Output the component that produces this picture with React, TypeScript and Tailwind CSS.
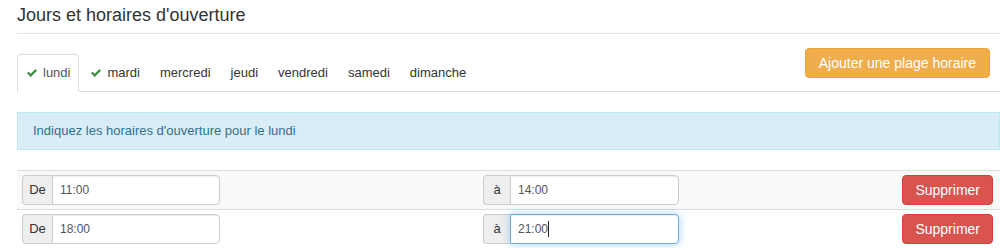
import React from "react";

const days = [
  { name: "lundi", done: true, active: true },
  { name: "mardi", done: true },
  { name: "mercredi" },
  { name: "jeudi" },
  { name: "vendredi" },
  { name: "samedi" },
  { name: "dimanche" },
];

const slots = [
  { from: "11:00", to: "14:00" },
  { from: "18:00", to: "21:00", focused: true },
];

function Check() {
  return (
    <svg width="10" height="8" viewBox="0 0 10 8" className="shrink-0 ml-[1px]">
      <polygon points="0,4.3 1.6,2.7 3.7,4.8 8.4,0.1 10,1.7 3.7,8" fill="#3f8f3f" />
    </svg>
  );
}

function TimeField({
  label,
  value,
  labelWidth,
  width,
  focused,
}: {
  label: string;
  value: string;
  labelWidth: string;
  width: string;
  focused?: boolean;
}) {
  return (
    <div className={`flex h-[30px] ${width}`}>
      <span
        className={`flex items-center justify-center ${labelWidth} shrink-0 bg-[#eee] border border-r-0 border-[#ccc] rounded-l-[4px] text-[13px] text-[#333]`}
      >
        {label}
      </span>
      <div className="relative flex-1">
        <input
          readOnly
          value={value}
          className={
            focused
              ? "w-full h-full pl-[7px] text-[12px] text-[#555] bg-white border border-[#66afe9] rounded-r-[4px] outline-none shadow-[inset_0_1px_1px_rgba(0,0,0,0.075),0_0_8px_rgba(102,175,233,0.6)]"
              : "w-full h-full pl-[7px] text-[12px] text-[#555] bg-white border border-[#ccc] rounded-r-[4px] outline-none shadow-[inset_0_1px_1px_rgba(0,0,0,0.075)]"
          }
        />
        {focused && (
          <span className="absolute left-[38px] top-[7px] h-[16px] w-px bg-[#222]" />
        )}
      </div>
    </div>
  );
}

export default function App() {
  return (
    <div className="pl-[17px] bg-white font-['Liberation_Sans',Arial,sans-serif] text-[13px] text-[#333]">
      <h4 className="pt-[5px] pb-[8px] text-[18px] leading-[20px] font-normal border-b border-[#e5e5e5]">
        Jours et horaires d'ouverture
      </h4>

      <div className="flex items-start justify-between mt-[14px] border-b border-[#ddd]">
        <ul className="flex mt-[6px]">
          {days.map((d) => (
            <li
              key={d.name}
              className={
                d.active
                  ? "flex items-center gap-[6px] h-[38px] -mb-px mr-[2px] px-[8px] bg-white border border-[#ddd] border-b-transparent rounded-t-[4px] text-[#555]"
                  : "flex items-center gap-[6px] h-[38px] -mb-px mr-[2px] px-[8px] border border-transparent text-[#333]"
              }
            >
              {d.done && <Check />}
              {d.name}
            </li>
          ))}
        </ul>
        <button className="mr-[10px] h-[30px] px-[13px] bg-[#f0ad4e] border border-[#eea236] rounded-[4px] text-[14px] text-white">
          Ajouter une plage horaire
        </button>
      </div>

      <div className="mt-[20px] px-[15px] py-[9px] leading-[18px] bg-[#d9edf7] border border-[#bce8f1] text-[#31708f]">
        Indiquez les horaires d'ouverture pour le lundi
      </div>

      <div className="mt-[20px]">
        {slots.map((s, i) => (
          <div
            key={i}
            className={`grid grid-cols-[460px_1fr_auto] items-center py-[4px] border-t border-[#ddd] ${
              i % 2 === 0 ? "bg-[#f9f9f9]" : "bg-white"
            }`}
          >
            <div className="pl-[5px]">
              <TimeField label="De" value={s.from} labelWidth="w-[30px]" width="w-[198px]" />
            </div>
            <div className="pl-[6px]">
              <TimeField
                label="à"
                value={s.to}
                labelWidth="w-[27px]"
                width="w-[196px]"
                focused={s.focused}
              />
            </div>
            <div className="pr-[7px]">
              <button className="h-[30px] px-[12px] bg-[#d9534f] border border-[#d43f3a] rounded-[4px] text-[14px] text-white">
                Supprimer
              </button>
            </div>
          </div>
        ))}
      </div>
    </div>
  );
}
